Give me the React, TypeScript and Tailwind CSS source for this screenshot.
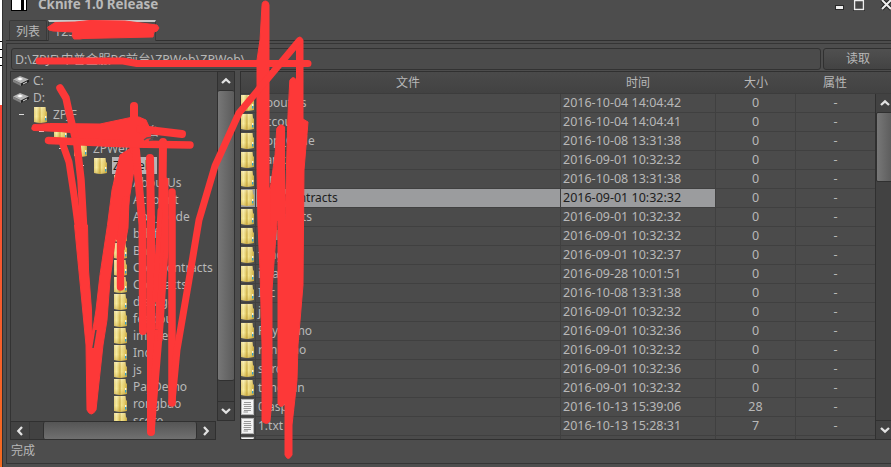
import React from "react";

const FONT = "font-['Noto_Sans','Noto_Sans_CJK_SC',sans-serif]";

function Folder() {
  return (
    <svg width="13" height="16" viewBox="0 0 13 16" className="block shrink-0">
      <defs>
        <linearGradient id="fold" x1="0" x2="1" y1="0" y2="0">
          <stop offset="0" stopColor="#e6d27c" />
          <stop offset=".2" stopColor="#f8eda4" />
          <stop offset=".38" stopColor="#e3cd6a" />
          <stop offset=".46" stopColor="#cbae4a" />
          <stop offset=".56" stopColor="#f3e491" />
          <stop offset=".8" stopColor="#e6cf6c" />
          <stop offset="1" stopColor="#c9a840" />
        </linearGradient>
        <linearGradient id="shade" x1="0" x2="0" y1="0" y2="1">
          <stop offset="0" stopColor="#fff" stopOpacity=".25" />
          <stop offset=".6" stopColor="#b89020" stopOpacity="0" />
          <stop offset="1" stopColor="#b89020" stopOpacity=".4" />
        </linearGradient>
      </defs>
      <path d="M0 0H11.5L12 4 13 5V15L6 16 0 15Z" fill="url(#fold)" />
      <path d="M0 0H11.5L12 4 13 5V15L6 16 0 15Z" fill="url(#shade)" />
      <path d="M11.7 9V11" stroke="#f8f8ee" strokeWidth="1.2" />
      <path d="M11.7 11V13.6" stroke="#2f9bd0" strokeWidth="1.3" />
    </svg>
  );
}

function Doc() {
  return (
    <svg width="13" height="16" viewBox="0 0 13 16" className="block shrink-0">
      <rect x=".5" y=".5" width="12" height="15" fill="#f4f4f4" stroke="#b5b5b5" />
      <path d="M3 3.5H10M2.5 5.5H10M3 7.5H10.5M2.5 9.5H10M3 11.5H10M2.5 13H7" stroke="#8c8c8c" strokeWidth=".9" />
    </svg>
  );
}

function Drive() {
  return (
    <svg width="16" height="10" viewBox="0 0 16 10" className="block shrink-0">
      <path d="M0 3.5 7 0 16 3.5 8 7.5Z" fill="#b4b4b4" />
      <path d="M0 3.5 8 7.5V10L0 6Z" fill="#808080" />
      <path d="M16 3.5 8 7.5V10L16 6Z" fill="#222" />
      <path d="M4 3 7 1.6 10 3 7 4.6Z" fill="#fff" />
      <path d="M10 8 14 6" stroke="#ddd" />
    </svg>
  );
}

function Chevron({ d }: { d: string }) {
  return (
    <svg width="10" height="10" viewBox="0 0 10 10" className="block">
      <path d={d} fill="none" stroke="#e2e2e2" strokeWidth="2.3" />
    </svg>
  );
}

function Minus() {
  return (
    <span className="flex w-[15px] shrink-0 items-center">
      <span className="h-px w-[5px] bg-[#dcdcdc]" />
    </span>
  );
}

const UP = "M1 7 5 3.3 9 7";
const DOWN = "M1 3 5 6.7 9 3";
const LEFT = "M7 1 3.3 5 7 9";
const RIGHT = "M3 1 6.7 5 3 9";

const folders = ["AboutUs", "Account", "App_Code", "bdxf", "Bank", "CreaContracts", "Contracts", "dialoge", "feedpu", "images", "Inc", "js", "PayDemo", "rongbao", "score"];

const files: [string, string, string][] = [
  ["AboutUs", "2016-10-04 14:04:42", "0"],
  ["Account", "2016-10-04 14:04:41", "0"],
  ["App_Code", "2016-10-08 13:31:38", "0"],
  ["bank", "2016-09-01 10:32:32", "0"],
  ["Bin", "2016-10-08 13:31:38", "0"],
  ["CreaContracts", "2016-09-01 10:32:32", "0"],
  ["Contracts", "2016-09-01 10:32:32", "0"],
  ["dialog", "2016-09-01 10:32:32", "0"],
  ["feng", "2016-09-01 10:32:37", "0"],
  ["image", "2016-09-28 10:01:51", "0"],
  ["Inc", "2016-10-08 13:31:38", "0"],
  ["js", "2016-09-01 10:32:32", "0"],
  ["PayDemo", "2016-09-01 10:32:36", "0"],
  ["rongbao", "2016-09-01 10:32:32", "0"],
  ["sqrcp", "2016-09-01 10:32:36", "0"],
  ["tongyan", "2016-09-01 10:32:32", "0"],
  ["0.aspx", "2016-10-13 15:39:06", "28"],
  ["1.txt", "2016-10-13 15:28:31", "7"],
  ["", "", ""],
];

function TitleBar() {
  return (
    <div className="flex h-[20px] shrink-0 items-start pl-[8px]">
      <svg width="16" height="11" viewBox="0 0 16 11" className="block">
        <path d="M0 0H16V11H0Z" fill="#000" />
        <path d="M1 0H10V10H1ZM13 0H15V10H13Z" fill="#fff" />
      </svg>
      <span className="-mt-[6px] ml-[11px] flex-1 whitespace-nowrap text-[13.4px] font-bold leading-[20px] text-[#b9b9b9]">Cknife 1.0 Release</span>
      <svg width="56" height="13" viewBox="0 0 56 13" className="block">
        <rect x=".5" y="5.5" width="8" height="4" fill="#eee" stroke="#292929" />
        <rect x="19.5" y=".5" width="9" height="9" fill="#474747" stroke="#222" strokeWidth="3" />
        <rect x="19.5" y=".5" width="9" height="9" fill="#474747" stroke="#eee" strokeWidth="1.5" />
        <path d="M47 0 56 9M47 9 56 0" stroke="#222" strokeWidth="4" />
        <path d="M47 0 56 9M47 9 56 0" stroke="#eee" strokeWidth="2" />
      </svg>
    </div>
  );
}

function Tabs() {
  return (
    <div className="flex h-[21px] shrink-0 items-end border-b border-[#303030] pl-[3px]">
      <div className="h-[20px] w-[38px] rounded-t-[2px] border border-b-0 border-[#393939] bg-[#484848] pl-[6px] text-[12px] leading-[21px]">列表</div>
      <div className="-mb-px ml-px h-[21px] w-[108px] border-x border-t-2 border-x-[#3a3a3a] border-t-[#c8c8c8] bg-[#4d4d4d] pl-[5px] text-[12.5px] leading-[19px]">123.57.218.9</div>
    </div>
  );
}

function Tree() {
  const row = "flex h-[17px] shrink-0 items-center whitespace-nowrap";
  return (
    <div className="flex w-[225px] shrink-0 flex-col">
      <div className="flex h-[350px]">
        <div className="flex w-[207px] flex-col overflow-hidden border-l border-t border-[#333] bg-[#494949] text-[12px]">
          <div className={row + " pl-[2px]"}><Drive /><span className="ml-1">C:</span></div>
          <div className={row + " pl-[2px]"}><Drive /><span className="ml-1">D:</span></div>
          <div className={row + " pl-[8px]"}><Minus /><Folder /><span className="ml-[6px]">ZPJF</span></div>
          <div className={row + " pl-[28px]"}><Minus /><Folder /><span className="ml-[6px]">中普金服PC前台</span></div>
          <div className={row + " pl-[48px]"}><Minus /><Folder /><span className="ml-[6px]">ZPWeb</span></div>
          <div className={row + " pl-[68px]"}><Minus /><Folder /><span className="ml-[5px] w-[45px] bg-[#b5b5b7] pl-px leading-[17px] text-[#202020]">ZPWeb</span></div>
          {folders.map((f) => (
            <div key={f} className={row + " pl-[103px]"}><Folder /><span className="ml-[6px]">{f}</span></div>
          ))}
        </div>
        <div className="flex w-[18px] flex-col border border-[#303030] bg-[#424242]">
          <div className="flex h-[18px] items-center justify-center"><Chevron d={UP} /></div>
          <div className="h-[291px] rounded-[2px] border-y border-[#303030] bg-gradient-to-r from-[#777] to-[#5c5c5c]" />
          <div className="flex-1" />
          <div className="flex h-[19px] items-center justify-center border-t border-[#303030]"><Chevron d={DOWN} /></div>
        </div>
      </div>
      <div className="flex h-[19px] w-[206px] border border-[#303030] bg-[#424242]">
        <div className="flex w-[19px] items-center justify-center border-r border-[#383838]"><Chevron d={LEFT} /></div>
        <div className="ml-[13px] w-[154px] rounded-[2px] border-x border-[#303030] bg-gradient-to-b from-[#555] to-[#707070]" />
        <div className="flex flex-1 items-center justify-center"><Chevron d={RIGHT} /></div>
      </div>
    </div>
  );
}

function FileTable() {
  const cols = "grid grid-cols-[15px_305px_155px_80px_79px]";
  return (
    <div className="flex min-w-0 flex-1 flex-col overflow-hidden border-y border-l border-[#303030] bg-[#4b4b4b]">
      <div className="flex h-[22px] shrink-0 items-center border-b border-[#3c3c3c] bg-gradient-to-b from-[#4a4a4a] to-[#424242] text-[12px]">
        <div className="w-[320px] pl-[14px] text-center">文件</div>
        <div className="w-[154px] text-center">时间</div>
        <div className="w-[80px] pl-[2px] text-center">大小</div>
        <div className="w-[80px] text-center">属性</div>
      </div>
      <div className="flex min-h-0 flex-1">
        <div className="w-[634px] shrink-0 overflow-hidden">
          {files.map(([name, time, size], i) => {
            const selected = i === 5;
            const cell = selected ? "bg-[#9b9c9e] text-[#202020]" : "";
            return (
              <div key={i} className={cols + " h-[19px] border-b border-[#404040] text-[12.5px] leading-[18px]"}>
                <div className={"overflow-hidden border-r border-[#414141] pt-px " + cell}>{i > 15 ? <Doc /> : <Folder />}</div>
                <div className={"border-r border-[#404040] pl-[2px] text-[12px] " + cell}>{name}</div>
                <div className={"border-r border-[#404040] pl-[2px] " + cell}>{time}</div>
                <div className="border-r border-[#404040] text-center">{size}</div>
                <div className="text-center">{time ? "-" : ""}</div>
              </div>
            );
          })}
        </div>
        <div className="flex w-[18px] shrink-0 flex-col border-l border-[#303030] bg-[#424242]">
          <div className="flex h-[18px] items-center justify-center"><Chevron d={UP} /></div>
          <div className="h-[70px] rounded-[2px] border border-[#303030] bg-gradient-to-r from-[#777] to-[#5c5c5c]" />
          <div className="flex-1" />
          <div className="flex h-[19px] items-center justify-center border-t border-[#303030]"><Chevron d={DOWN} /></div>
        </div>
      </div>
    </div>
  );
}

// Freehand red marker strokes laid over the window.
function Marker() {
  return (
    <svg width="891" height="467" viewBox="0 0 891 467" className="pointer-events-none absolute left-0 top-0">
      <g fill="#fd3838" stroke="#fd3838" strokeLinejoin="round" strokeLinecap="round" strokeWidth="1">
        <path d="M48 27 55 22.500 75 22 90 20.500 125 21 145 23.500 157 25 159 28 157 31 154 32 153 37 130 37.500 83 38.500 80 39 74 39 72 36 73 32 53 31 49 30Z" />
        <path d="M262 5Q262 1 266 1Q269 2 269 5L269 187 274 200 277 222 272 290 272 400 270 421Q267 426 262 421L262 345 260 270 258 225 257 170 257 60 260 40Z" />
        <path d="M277 128Q281 122 284.500 127L284.500 404Q281 409 278 404L278 220 271 226 270 190 275 155Z" />
        <path d="M290 80Q293 75 296.500 80L296.500 40Q300 34 303 40L303 119 308 122 304 170 303 285 298 345 297 380 292 425 292 455Q288 462 285 455L285 220 288 115Z" />
        <path d="M33 125Q30 130 34 130.500L60 131.500 76 133 78 139 105 146 138 146 150 140 151 131 146 120 139 117 133 117 100 124 50 123.500Z" />
        <path d="M107.500 225 112 190 120 155 137 144 134 170 129 200 128 228 124 250 115.500 238 110 280 107 320 103 345 96 410Q91 418 87 410L86 345 82 303 74.500 225H87.500L88.500 270 91.500 310 92 335 96 310 100 275Z" />
      </g>
      <g fill="none" stroke="#fd3838" strokeLinecap="round" strokeLinejoin="round" strokeWidth="8">
        <path d="M39 61H123L137 63.500H308" strokeWidth="7" />
        <path d="M60 88 66 98 69 112 77 145 81 180 83.500 225" strokeWidth="7.500" />
        <path d="M63 145 69 162 74 195 78 225" strokeWidth="7" />
        <path d="M120.500 287V240L126 200" strokeWidth="7.500" />
        <path d="M134 106V150" />
        <path d="M136 150 138.500 180 142.500 225 143 331" strokeWidth="8" />
        <path d="M150 158 151 220V432" />
        <path d="M163 142 162.500 190 162 240 159 330 151 428" />
        <path d="M166 180V250L160 340" strokeWidth="5" />
        <path d="M160 210 155 300" strokeWidth="5" />
        <path d="M140 129 182 134" />
        <path d="M48.500 140.500 130 144 190 145" strokeWidth="7.500" />
        <path d="M172 192V403" strokeWidth="7.500" />
        <path d="M172 402 177 350 189 280 199 220 215 166 239 113 269 77 299 41" strokeWidth="7" />
      </g>
      <path d="M144 140 147 138 154 137M149 140.500 153 139" fill="none" stroke="#5b5555" strokeWidth="1.500" />
      <path d="M93 348 96 330" stroke="#4b4b4b" strokeWidth="1.500" />
    </svg>
  );
}

export default function App() {
  return (
    <div className={FONT + " relative flex h-[467px] w-[891px] overflow-hidden bg-[#4d4d4d] text-[#b8b8b8]"}>
      <div className="flex w-[2px] shrink-0 flex-col bg-white">
        <div className="mt-[41px] h-[25px] border-y border-black"><div className="mt-[7px] h-[9px] border-y border-black" /></div>
        <div className="mt-[39px] flex-1 bg-gradient-to-b from-[#fa4738] to-[#f36a20]" />
      </div>
      <div className="flex min-w-0 flex-1 flex-col border-l border-[#303030]">
        <TitleBar />
        <div className="ml-[3px] flex min-h-0 flex-1 flex-col">
          <Tabs />
          <div className="mt-[2px] flex h-[421px] flex-col border-b border-l border-t border-[#353535] pl-[3px] pt-[4px]">
            <div className="flex h-[22px] shrink-0 gap-[2px] pl-px">
              <div className="w-[810px] shrink-0 rounded-[3px] border border-[#323232] bg-[#4b4b4b] pl-[3px] text-[12.4px] leading-[21px]">D:\ZPJF\中普金服PC前台\ZPWeb\ZPWeb\</div>
              <div className="w-[75px] shrink-0 rounded-l-[3px] border border-[#303030] bg-gradient-to-b from-[#505050] to-[#434343] pl-[22px] text-[12px] leading-[20px]">读取</div>
            </div>
            <div className="mt-px flex h-[369px] shrink-0 gap-[5px]">
              <Tree />
              <FileTable />
            </div>
            <div className="pl-px text-[12px] leading-[21px]">完成</div>
          </div>
        </div>
      </div>
      <Marker />
    </div>
  );
}
